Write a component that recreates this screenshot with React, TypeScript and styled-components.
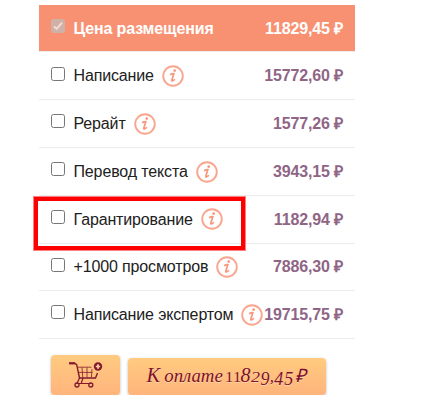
import React from 'react';
import styled, { createGlobalStyle } from 'styled-components';

const GlobalStyle = createGlobalStyle`
  * { box-sizing: border-box; }
  body { margin: 0; background: #fff; font-family: "Liberation Sans", Arial, sans-serif; }
`;

const Panel = styled.main`
  width: 316px;
  margin: 5px 0 0 39px;
`;

const Row = styled.label<{ $height: number; $header?: boolean }>`
  position: relative;
  display: flex;
  align-items: flex-start;
  height: ${p => p.$height}px;
  padding: 0 12px;
  border-bottom: 1px solid #ededed;
  background: ${p => (p.$header ? '#f89172' : 'transparent')};
  background-clip: padding-box;
  color: ${p => (p.$header ? '#fff' : '#212121')};
  font-size: 16px;
  font-weight: ${p => (p.$header ? 700 : 400)};
  line-height: 18px;
  letter-spacing: -0.14px;
  white-space: nowrap;
`;

const Check = styled.input<{ $top: number }>`
  appearance: none;
  flex: none;
  width: 14px;
  height: 14px;
  margin: ${p => p.$top}px 8.5px 0 0;
  border: 1px solid #767676;
  border-radius: 2.5px;
  background: #fff;
  &:disabled {
    border-color: #cfb1a8;
    background: #cfb1a8 url("data:image/svg+xml,%3Csvg xmlns='http://www.w3.org/2000/svg' viewBox='0 0 12 12'%3E%3Cpath d='M2 6.3l2.6 2.6L10 2.7' fill='none' stroke='%23f5ded7' stroke-width='1.8'/%3E%3C/svg%3E") center / 12px no-repeat;
  }
`;

const Name = styled.span<{ $top: number }>`
  flex: none;
  margin-top: ${p => p.$top}px;
`;

const Price = styled.span<{ $top: number; $header?: boolean }>`
  flex: none;
  margin: ${p => p.$top}px 0 0 auto;
  color: ${p => (p.$header ? '#fff' : '#8f6585')};
  font-weight: 700;
`;

const InfoIcon = styled.svg<{ $top: number }>`
  flex: none;
  width: 22px;
  height: 22px;
  margin: ${p => p.$top}px 0 0 8px;
`;

const Highlight = styled.span`
  position: absolute;
  left: -6px;
  top: 0;
  width: 213px;
  height: 55px;
  border: 5px solid #fe0000;
  outline: 1px solid #ff8080;
  outline-offset: -1px;
  pointer-events: none;
`;

const Actions = styled.div`
  display: flex;
  align-items: flex-end;
  gap: 8px;
  height: 56px;
  padding-left: 12px;
`;

const Button = styled.button<{ $width: number; $height: number }>`
  display: flex;
  align-items: center;
  justify-content: center;
  flex: none;
  width: ${p => p.$width}px;
  height: ${p => p.$height}px;
  padding: 0;
  border: 0;
  border-radius: 4px;
  background: linear-gradient(#ffcb80, #ffb47c);
  box-shadow: 0 1px 3px rgba(0, 0, 0, 0.28);
  color: #7d102c;
`;

const CartIcon = styled.svg`
  width: 36px;
  height: 28px;
`;

const PayText = styled.span`
  display: flex;
  align-items: baseline;
  width: 165px;
  height: 28px;
  font: italic 20.5px/24px "Liberation Serif", serif;
  text-shadow: 0 1px 0 #ffd9aa;
  white-space: nowrap;
`;

const PayWord = styled.span<{ $width: number; $size: number }>`
  flex: none;
  width: ${p => p.$width}px;
  font-size: ${p => p.$size}px;
`;

const Figure = styled.span<{ $width: number; $size: number; $drop?: number; $upright?: boolean; $stretch?: number }>`
  flex: none;
  width: ${p => p.$width}px;
  font-size: ${p => p.$size}px;
  font-style: ${p => (p.$upright ? 'normal' : 'italic')};
  text-align: left;
  transform: translateY(${p => p.$drop ?? 0}px) scaleX(${p => p.$stretch ?? 1});
  transform-origin: left;
`;

const rows = [
  { name: 'Написание', price: '15772,60 ₽', height: 48, check: 15, text: 15, icon: 13 },
  { name: 'Рерайт', price: '1577,26 ₽', height: 48, check: 14, text: 15, icon: 13 },
  { name: 'Перевод текста', price: '3943,15 ₽', height: 48, check: 14, text: 15, icon: 13 },
  { name: 'Гарантирование', price: '1182,94 ₽', height: 48, check: 14, text: 15, icon: 12, marked: true },
  { name: '+1000 просмотров', price: '7886,30 ₽', height: 47, check: 14, text: 14, icon: 12 },
  { name: 'Написание экспертом', price: '19715,75 ₽', height: 48, check: 14, text: 15, icon: 13 },
];

const figures = [
  { char: '1', width: 7.5, size: 15, upright: true, stretch: 1.1 },
  { char: '1', width: 8, size: 15, upright: true, stretch: 1.1 },
  { char: '8', width: 10.5, size: 20 },
  { char: '2', width: 9.5, size: 15, stretch: 1.2 },
  { char: '9', width: 9.2, size: 18, drop: 3 },
  { char: ',', width: 4.5, size: 17 },
  { char: '4', width: 10, size: 18, drop: 3 },
  { char: '5', width: 10.5, size: 18, drop: 3 },
  { char: '₽', width: 13, size: 18.5 },
];

function Info({ top }: { top: number }) {
  return (
    <InfoIcon $top={top} viewBox="0 0 22 22" fill="none" stroke="#faa58e">
      <circle cx="11" cy="11" r="9.8" strokeWidth="1.9" />
      <circle cx="12.7" cy="5.6" r="1.35" fill="#f9977c" stroke="none" />
      <path d="M8 9.8q2.2-1.2 3.8-1.1L9.8 15.3q-.3 1.6 3.2-.9" stroke="#f9977c" strokeWidth="1.7" />
    </InfoIcon>
  );
}

function Cart() {
  return (
    <CartIcon viewBox="0 0 36 28" fill="none" stroke="#83192d">
      <path d="M1 2.5h6l1.7 1.2L11.5 17h16l2-5" strokeWidth="1.4" />
      <path d="M1 2.2h6" strokeWidth="2" />
      <path d="M9.5 6.2h14M10.5 11.4h14M14 6.5l.8 10M19 6.5v10M24 8l-.6 8.5" strokeWidth=".8" />
      <path d="M11.5 17L9 22.5h14M15 17l-1.7 5" strokeWidth="1.2" />
      <circle cx="9" cy="24" r="2" strokeWidth="1.3" />
      <circle cx="22.8" cy="24" r="2" strokeWidth="1.3" />
      <circle cx="30" cy="5.5" r="4.2" fill="#83192d" stroke="none" />
      <path d="M30 3.3v4.4M27.8 5.5h4.4" stroke="#ffd0a0" strokeWidth="1.7" />
    </CartIcon>
  );
}

export default function App() {
  return (
    <>
      <GlobalStyle />
      <Panel>
        <Row $height={47} $header>
          <Check type="checkbox" $top={14} checked disabled readOnly />
          <Name $top={15}>Цена размещения</Name>
          <Price $top={15} $header>11829,45 ₽</Price>
        </Row>
        {rows.map(row => (
          <Row key={row.name} $height={row.height}>
            <Check type="checkbox" $top={row.check} />
            <Name $top={row.text}>{row.name}</Name>
            <Info top={row.icon} />
            <Price $top={row.text}>{row.price}</Price>
            {row.marked && <Highlight />}
          </Row>
        ))}
        <Actions>
          <Button $width={69} $height={40} aria-label="Корзина"><Cart /></Button>
          <Button $width={198} $height={37}>
            <PayText>
              <PayWord $width={17.5} $size={20.5}>К</PayWord>
              <PayWord $width={63} $size={18.8}>оплате</PayWord>
              {figures.map((f, i) => (
                <Figure key={i} $width={f.width} $size={f.size} $drop={f.drop} $upright={f.upright} $stretch={f.stretch}>{f.char}</Figure>
              ))}
            </PayText>
          </Button>
        </Actions>
      </Panel>
    </>
  );
}
